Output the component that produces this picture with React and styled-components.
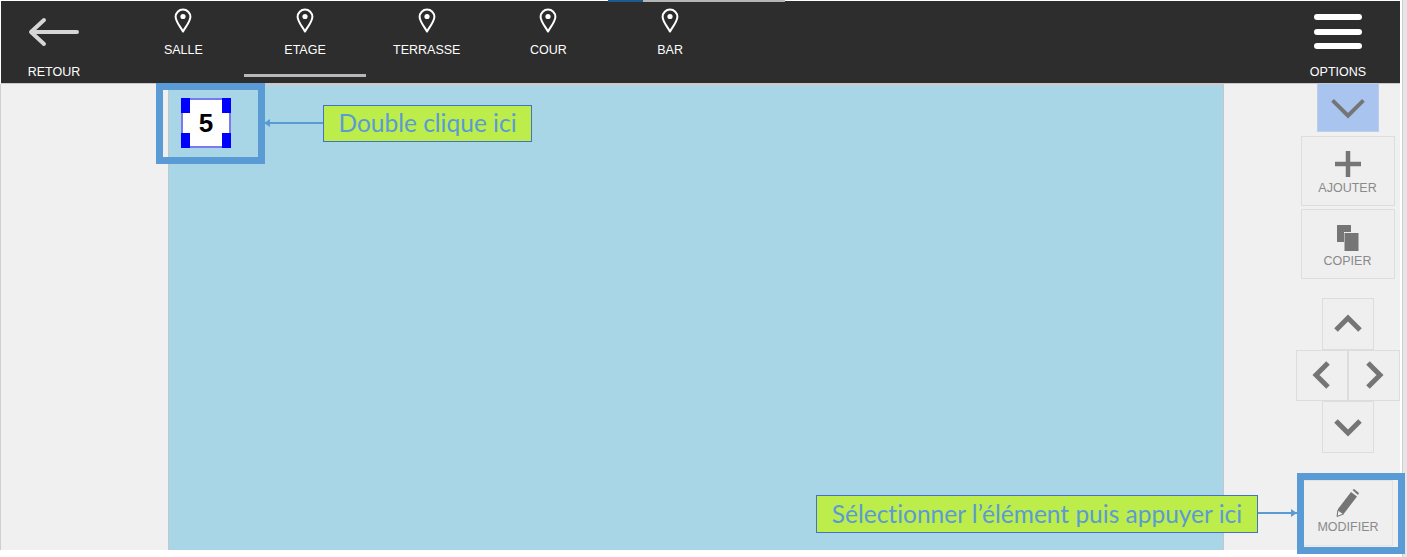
import styled, { createGlobalStyle } from "styled-components"

const Global = createGlobalStyle`
  html, body { margin: 0; padding: 0; background: #fff; }
  body { font-family: "Liberation Sans", Arial, sans-serif; }
`

const tabs = ["SALLE", "ETAGE", "TERRASSE", "COUR", "BAR"]

const Pin = () => (
  <svg width="18" height="26" viewBox="0 0 18 26">
    <path d="M9 24.5 C7.5 21 2 15.5 1.6 10 A7.4 7.4 0 1 1 16.4 10 C16 15.5 10.5 21 9 24.5Z" fill="none" stroke="#fff" strokeWidth="2" strokeLinejoin="round" />
    <circle cx="9" cy="9.5" r="2.6" fill="#fff" />
  </svg>
)

const Chevron = ({ dir, size = 28, weight = 5 }) => {
  const rot = { down: 0, up: 180, left: 90, right: -90 }[dir]
  return (
    <svg width={size} height={size} viewBox="0 0 28 28" style={{ transform: `rotate(${rot}deg)` }}>
      <path d="M2 8 L14 20 L26 8" fill="none" stroke="#757575" strokeWidth={weight} />
    </svg>
  )
}

const App = () => {
  return (
    <Page>
      <Global />
      <TopLine />
      <Header>
        <Retour>
          <svg width="52" height="32" viewBox="0 0 52 32">
            <path d="M16 4 L3 16 L16 28 M4 16 H49" fill="none" stroke="#d6d6d6" strokeWidth="4" strokeLinecap="round" strokeLinejoin="round" />
          </svg>
          <HeadLabel>RETOUR</HeadLabel>
        </Retour>
        <Tabs>
          {tabs.map((t, i) => (
            <Tab key={i} active={t == "ETAGE"}>
              <Pin />
              <TabLabel>{t}</TabLabel>
            </Tab>
          ))}
        </Tabs>
        <Options>
          <Burger>
            <span />
            <span />
            <span />
          </Burger>
          <HeadLabel>OPTIONS</HeadLabel>
        </Options>
      </Header>
      <Main>
        <Gutter />
        <Canvas>
          <TableItem>
            <Corner top left />
            <Corner top />
            <Corner left />
            <Corner />
            5
          </TableItem>
        </Canvas>
        <Sidebar>
          <Toggle>
            <Chevron dir="down" size={36} weight={3} />
          </Toggle>
          <AddBtn>
            <svg width="26" height="26" viewBox="0 0 26 26">
              <path d="M13 0 V26 M0 13 H26" stroke="#757575" strokeWidth="4.5" />
            </svg>
            <ActionLabel>AJOUTER</ActionLabel>
          </AddBtn>
          <CopyBtn>
            <svg width="22" height="26" viewBox="0 0 22 26">
              <path d="M0 0 H14 V7 H7 V17 H0Z" fill="#757575" />
              <rect x="7.5" y="8" width="14" height="18" fill="#757575" />
            </svg>
            <ActionLabel>COPIER</ActionLabel>
          </CopyBtn>
          <Pad>
            <PadRow>
              <PadBtn><Chevron dir="up" /></PadBtn>
            </PadRow>
            <PadRow>
              <PadBtn><Chevron dir="left" /></PadBtn>
              <PadBtn><Chevron dir="right" /></PadBtn>
            </PadRow>
            <PadRow>
              <PadBtn><Chevron dir="down" /></PadBtn>
            </PadRow>
          </Pad>
          <EditBtn>
            <svg width="24" height="28" viewBox="0 0 24 28">
              <path d="M1 27 L2 20 L15 3 L21 7.5 L8 24.5Z" fill="#757575" />
              <path d="M16.5 1 L18 0 L23 4 L22 6 Z" fill="#757575" />
              <path d="M2 21 L7.5 25 L1 27.5Z" fill="#efefef" stroke="#757575" strokeWidth="1" />
            </svg>
            <ActionLabel>MODIFIER</ActionLabel>
          </EditBtn>
        </Sidebar>
      </Main>
      <RightStrip />

      <Frame x={156} y={83} w={109} h={81} />
      <Frame x={1297} y={473} w={108} h={81} />
      <Callout x={323} y={105} w={209} h={37}>Double clique ici</Callout>
      <Callout x={816} y={495} w={442} h={38}>Sélectionner l’élément puis appuyer ici</Callout>
      <Arrow x={264} y={119} w={59} />
      <Arrow x={1258} y={509} w={39} right />
    </Page>
  )
}

export default App

const Page = styled.div`
  position: relative;
  width: 1407px;
  height: 557px;
  overflow: hidden;
  background: #fff;
`

const TopLine = styled.div`
  position: absolute;
  top: 0;
  left: 608px;
  width: 177px;
  height: 2px;
  background: linear-gradient(to right, #1c5a8a 0, #1c5a8a 35px, #b5b5b5 35px);
`

const Header = styled.header`
  display: flex;
  justify-content: space-between;
  width: 1399px;
  height: 82px;
  margin: 1px 0 0 1px;
  background: #2d2d2d;
  border-bottom: 1px solid #c9c9c9;
`

const Retour = styled.div`
  width: 106px;
  display: flex;
  flex-direction: column;
  align-items: center;
  padding-top: 15px;
  svg { margin-bottom: 16.5px; }
`

const HeadLabel = styled.div`
  color: #fff;
  font-size: 12.5px;
  line-height: 15px;
`

const Tabs = styled.nav`
  display: flex;
  flex: 1;
  margin-left: 15.5px;
`

const Tab = styled.div`
  position: relative;
  width: 121.7px;
  display: flex;
  flex-direction: column;
  align-items: center;
  padding-top: 6px;
  svg { margin-bottom: 9.5px; }
  &::after {
    content: "";
    display: ${(props) => (props.active ? "block" : "none")};
    position: absolute;
    left: 0;
    right: 0;
    top: 73px;
    height: 3px;
    background: #b8b8b8;
  }
`

const TabLabel = styled.div`
  color: #fff;
  font-size: 12.5px;
  line-height: 15px;
`

const Options = styled.div`
  width: 122px;
  display: flex;
  flex-direction: column;
  align-items: center;
  margin-right: 1px;
  padding: 13px 0 0 0;
`

const Burger = styled.div`
  width: 48px;
  display: flex;
  flex-direction: column;
  gap: 8.5px;
  margin-bottom: 15.5px;
  span {
    height: 6px;
    border-radius: 3px;
    background: #fff;
  }
`

const Main = styled.main`
  display: flex;
  box-sizing: border-box;
  width: 1400px;
  height: 466px;
  background: #f0f0f0;
  border-left: 1px solid #cfcfcf;
`

const Gutter = styled.div`
  width: 167px;
  flex: none;
`

const Canvas = styled.div`
  position: relative;
  width: 1056px;
  flex: none;
  box-sizing: border-box;
  background: #a8d6e6;
  border: 1px solid #bfc9cd;
  border-top: 2px solid #c6ced1;
  border-bottom: none;
`

const TableItem = styled.div`
  position: absolute;
  left: 12px;
  top: 12px;
  width: 50px;
  height: 50px;
  box-sizing: border-box;
  display: grid;
  place-items: center;
  background: #fff;
  border: 2px solid #7a7af0;
  font-size: 26px;
  font-weight: 700;
  color: #000;
`

const Corner = styled.i`
  position: absolute;
  width: 9px;
  height: 15px;
  background: #0000ff;
  ${(props) => (props.top ? "top: -2px;" : "bottom: -2px;")}
  ${(props) => (props.left ? "left: -2px;" : "right: -2px;")}
`

const Sidebar = styled.aside`
  width: 104px;
  margin-left: 72px;
  display: flex;
  flex-direction: column;
  align-items: center;
`

const Toggle = styled.button`
  width: 62px;
  height: 48px;
  padding: 0;
  flex: none;
  display: grid;
  place-items: center;
  background: #a9c4ef;
  border: 1px solid #bdcfe6;
  border-top: none;
  box-sizing: border-box;
`

const ActionBtn = styled.button`
  width: 94px;
  height: 70px;
  flex: none;
  margin-left: -1px;
  padding: 0;
  box-sizing: border-box;
  display: flex;
  flex-direction: column;
  align-items: center;
  justify-content: center;
  background: #efefef;
  border: 1px solid #dddddd;
`

const AddBtn = styled(ActionBtn)`
  margin-top: 4px;
  gap: 4px;
  padding-top: 4px;
`

const CopyBtn = styled(ActionBtn)`
  margin-top: 3px;
  gap: 3px;
  padding-top: 6px;
`

const ActionLabel = styled.span`
  color: #8a8a8a;
  font-family: "Liberation Sans", Arial, sans-serif;
  font-size: 12.5px;
  line-height: 15px;
`

const Pad = styled.div`
  margin-top: 19px;
  display: flex;
  flex-direction: column;
  align-items: center;
`

const PadRow = styled.div`
  display: flex;
`

const PadBtn = styled.button`
  width: 52px;
  height: 51.6px;
  padding: 0;
  box-sizing: border-box;
  display: grid;
  place-items: center;
  background: #efefef;
  border: 1px solid #dddddd;
`

const EditBtn = styled(ActionBtn)`
  width: 90px;
  height: 66px;
  margin: 27px 0 0 0;
  gap: 3px;
  padding-bottom: 2px;
  border: 1px solid #e2e2e2;
`

const RightStrip = styled.div`
  position: absolute;
  top: 0;
  right: 0;
  bottom: 0;
  width: 4px;
  background: #e6e6e6;
  border-left: 1px solid #cfcfcf;
`

const Frame = styled.div`
  position: absolute;
  left: ${(props) => props.x}px;
  top: ${(props) => props.y}px;
  width: ${(props) => props.w}px;
  height: ${(props) => props.h}px;
  box-sizing: border-box;
  border: 7px solid #5b9bd5;
`

const Callout = styled.div`
  position: absolute;
  left: ${(props) => props.x}px;
  top: ${(props) => props.y}px;
  width: ${(props) => props.w}px;
  height: ${(props) => props.h}px;
  box-sizing: border-box;
  display: grid;
  place-items: center;
  padding-bottom: 2px;
  background: #bced4a;
  border: 1px solid #4472c4;
  color: #5b9bd5;
  font-family: Lato, "Open Sans", sans-serif;
  font-size: 24.5px;
  font-variant-ligatures: none;
  white-space: nowrap;
`

const Arrow = styled.div`
  position: absolute;
  left: ${(props) => props.x}px;
  top: ${(props) => props.y}px;
  width: ${(props) => props.w}px;
  height: 8px;
  &::before {
    content: "";
    position: absolute;
    left: 0;
    right: 0;
    top: 3px;
    height: 2px;
    background: #5b9bd5;
  }
  &::after {
    content: "";
    position: absolute;
    top: 0;
    ${(props) => (props.right ? "right: 0;" : "left: 0;")}
    border-top: 4px solid transparent;
    border-bottom: 4px solid transparent;
    ${(props) => (props.right ? "border-left: 6px solid #5b9bd5;" : "border-right: 6px solid #5b9bd5;")}
  }
`
